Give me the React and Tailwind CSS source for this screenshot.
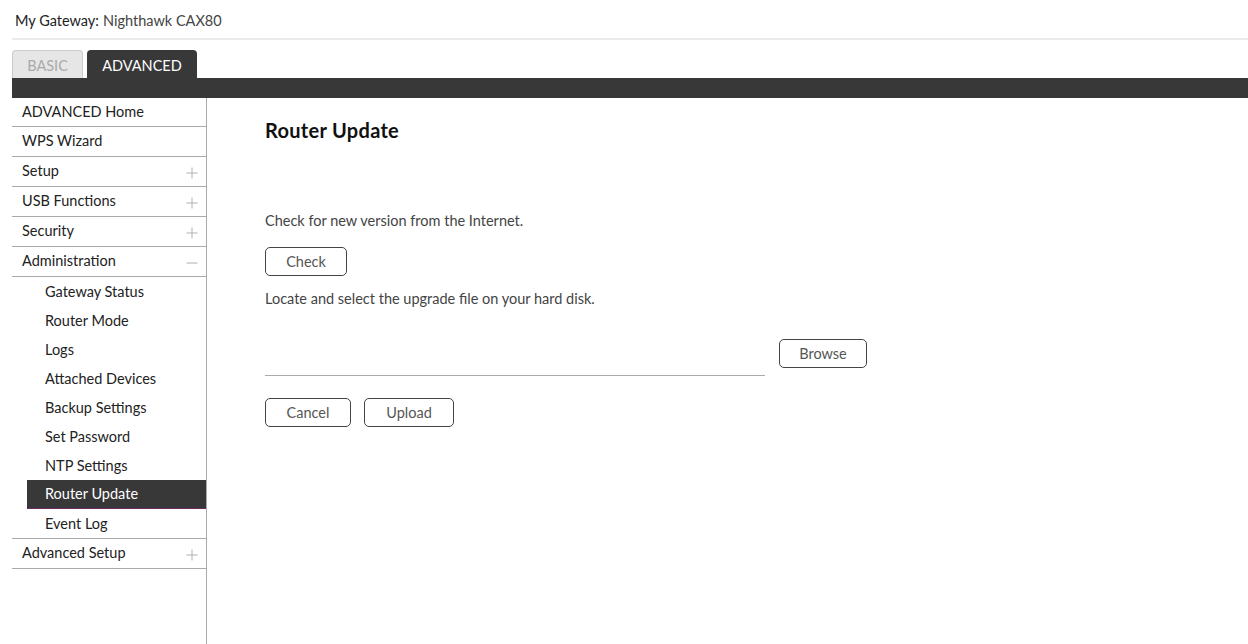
import { useState } from "react";

const FONT = "font-['Lato','Open_Sans',sans-serif]";

const topItems = [
  { label: "ADVANCED Home", h: "h-[29px]" },
  { label: "WPS Wizard" },
  { label: "Setup", icon: "+" },
  { label: "USB Functions", icon: "+" },
  { label: "Security", icon: "+" },
];

const adminItems = [
  "Gateway Status",
  "Router Mode",
  "Logs",
  "Attached Devices",
  "Backup Settings",
  "Set Password",
  "NTP Settings",
  "Router Update",
  "Event Log",
];

function PlusIcon() {
  return (
    <svg width="12" height="12" viewBox="0 0 12 12" className="text-[#b0b0b0] mt-[3px]">
      <path d="M6 0.5v11M0.5 6h11" stroke="currentColor" strokeWidth="1" fill="none" />
    </svg>
  );
}

function MinusIcon() {
  return (
    <svg width="12" height="12" viewBox="0 0 12 12" className="text-[#b0b0b0] mt-[3px]">
      <path d="M0.5 6h11" stroke="currentColor" strokeWidth="1" fill="none" />
    </svg>
  );
}

function NavRow({ label, icon, h = "h-[30px]" }) {
  return (
    <div className={`${h} border-b border-[#aaaaaa] flex items-center justify-between pl-[10px] pr-[8px] pb-[1px] text-[14.5px] text-[#222]`}>
      <span>{label}</span>
      {icon === "+" && <PlusIcon />}
      {icon === "-" && <MinusIcon />}
    </div>
  );
}

function OutlineButton({ children, className = "" }) {
  return (
    <button className={`h-[29px] rounded-[5px] border border-[#444] bg-white text-[14.5px] text-[#555] ${className}`}>
      {children}
    </button>
  );
}

export default function App() {
  const [active, setActive] = useState("Router Update");

  return (
    <div className={`${FONT} w-[1248px] h-[644px] bg-white overflow-hidden text-[#333]`}>
      {/* header */}
      <div className="h-[38px] pl-[15px] flex items-center text-[14.5px] text-[#222] pt-[3px]">
        <span>My Gateway:</span>
        <span className="ml-[4px] text-[#444]">Nighthawk CAX80</span>
      </div>
      <div className="ml-[12px] h-[2px] bg-[#ebebeb]" />

      {/* tabs */}
      <div className="ml-[12px] mt-[10px] flex items-end gap-[4px] h-[28px]">
        <div className="w-[71px] h-[28px] pt-[3px] rounded-t-[4px] border border-b-0 border-[#cccccc] bg-[#e6e6e6] text-[#aaaaaa] text-[14.5px] flex items-center justify-center">
          BASIC
        </div>
        <div className="w-[110px] h-[28px] pt-[3px] rounded-t-[4px] bg-[#383838] text-white text-[14.5px] flex items-center justify-center">
          ADVANCED
        </div>
      </div>
      <div className="ml-[12px] h-[20px] bg-[#383838]" />

      <div className="flex">
        {/* sidebar */}
        <div className="ml-[12px] w-[195px] h-[546px] border-r border-[#aaaaaa]">
          {topItems.map((it) => (
            <NavRow key={it.label} label={it.label} icon={it.icon} h={it.h} />
          ))}
          <NavRow label="Administration" icon="-" />
          <div className="border-b border-[#aaaaaa]">
            {adminItems.map((label) => (
              <div
                key={label}
                onClick={() => setActive(label)}
                className={
                  label === active
                    ? "ml-[15px] h-[29px] flex items-center pl-[18px] text-[14.5px] bg-[#383838] text-white border-b border-[#6a2c5c]"
                    : "ml-[15px] h-[29px] flex items-center pl-[18px] text-[14.5px] text-[#222]"
                }
              >
                {label}
              </div>
            ))}
          </div>
          <NavRow label="Advanced Setup" icon="+" />
        </div>

        {/* main */}
        <div className="pl-[58px] pt-[20px] flex-1">
          <h1 className="text-[20px] font-bold text-[#111] leading-[24px] tracking-[0.3px]">Router Update</h1>
          <p className="mt-[69px] text-[14.5px] text-[#444] leading-[20px]">Check for new version from the Internet.</p>
          <OutlineButton className="mt-[16px] w-[82px]">Check</OutlineButton>
          <p className="mt-[13px] text-[14.5px] text-[#444] leading-[20px]">Locate and select the upgrade file on your hard disk.</p>
          <div className="mt-[30px] flex items-start">
            <div className="w-[500px] h-[37px] border-b border-[#aaaaaa]" />
            <OutlineButton className="ml-[14px] w-[88px]">Browse</OutlineButton>
          </div>
          <div className="mt-[22px] flex gap-[13px]">
            <OutlineButton className="w-[86px]">Cancel</OutlineButton>
            <OutlineButton className="w-[90px]">Upload</OutlineButton>
          </div>
        </div>
      </div>
    </div>
  );
}
